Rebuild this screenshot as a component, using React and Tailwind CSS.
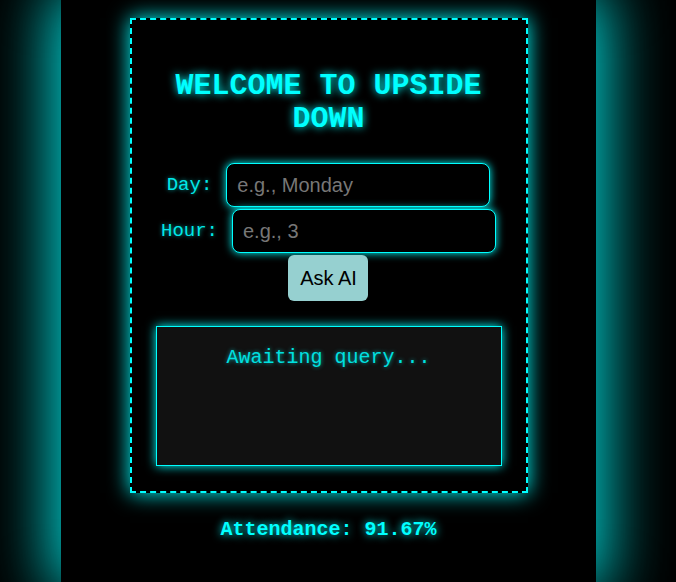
export default function App() {
  return (
    <div className="min-h-screen bg-black overflow-hidden flex justify-start pl-[61px]">
      <div className="w-[535px] min-h-screen bg-black shadow-[0_0_60px_10px_rgba(0,255,255,0.85)] flex flex-col items-center font-['Courier_New','Nimbus_Mono_PS','FreeMono','Liberation_Mono',monospace]">
        <div className="mt-[18px] w-[398px] border-2 border-dashed border-[#00ffff] bg-black shadow-[0_0_20px_#00ffff] pt-[50px] pb-[25px] flex flex-col items-center">
          <h1 className="text-[30px] leading-[33px] font-bold text-[#00ffff] text-center [text-shadow:0_0_8px_#00ffff] px-6">
            WELCOME TO UPSIDE DOWN
          </h1>

          <div className="mt-[27px] flex flex-col items-center gap-[2px]">
            <div className="flex items-center gap-[14px]">
              <label className="text-[19px] text-[#00e8e8] [text-shadow:0_0_4px_rgba(0,255,255,0.6)]">Day:</label>
              <input
                placeholder="e.g., Monday"
                className="w-[264px] h-[44px] bg-black border border-[#00ffff] rounded-[8px] px-[10px] text-[20px] text-white placeholder:text-[#777] font-['Liberation_Sans',Arial,sans-serif] shadow-[0_0_8px_#00ffff] outline-none"
              />
            </div>
            <div className="flex items-center gap-[14px]">
              <label className="text-[19px] text-[#00e8e8] [text-shadow:0_0_4px_rgba(0,255,255,0.6)]">Hour:</label>
              <input
                placeholder="e.g., 3"
                className="w-[264px] h-[44px] bg-black border border-[#00ffff] rounded-[8px] px-[10px] text-[20px] text-white placeholder:text-[#777] font-['Liberation_Sans',Arial,sans-serif] shadow-[0_0_8px_#00ffff] outline-none"
              />
            </div>
            <button className="w-[80px] h-[46px] bg-[#96d0d0] rounded-[6px] text-[20px] text-black font-['Liberation_Sans',Arial,sans-serif]">
              Ask AI
            </button>
          </div>

          <div className="mt-[25px] w-[346px] h-[140px] bg-[#111111] border border-[#00ffff] shadow-[0_0_10px_#00ffff] pt-[19px] text-center">
            <p className="text-[20px] leading-[23px] text-[#00e0e0] [text-shadow:0_0_4px_rgba(0,255,255,0.6)]">Awaiting query...</p>
          </div>
        </div>

        <p className="mt-[25px] text-[20px] leading-[23px] font-bold text-[#00ffff] [text-shadow:0_0_8px_#00ffff]">
          Attendance: 91.67%
        </p>
      </div>
    </div>
  );
}
